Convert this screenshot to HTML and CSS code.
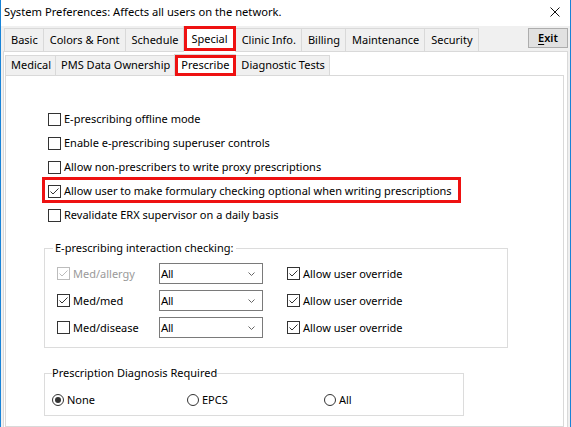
FILE: index.html
```html
<!DOCTYPE html>
<html>
<head>
<meta charset="utf-8">
<link rel="stylesheet" href="styles.css">
</head>
<body>
<div class="window">
  <div class="titlebar">
    <span class="title">System Preferences: Affects all users on the network.</span>
    <svg class="close" width="10" height="10" viewBox="0 0 10 10"><path d="M0.5 0.5L9.5 9.5M9.5 0.5L0.5 9.5" stroke="#111" stroke-width="1" fill="none"/></svg>
  </div>
  <div class="body">
    <div class="tabbar">
      <div class="tabs">
        <div class="tab">Basic</div>
        <div class="tab">Colors &amp; Font</div>
        <div class="tab">Schedule</div>
        <div class="tab sel marked">Special</div>
        <div class="tab">Clinic Info.</div>
        <div class="tab">Billing</div>
        <div class="tab">Maintenance</div>
        <div class="tab">Security</div>
      </div>
      <div class="exit"><u>E</u>xit</div>
    </div>
    <div class="panel">
      <div class="subtabs">
        <div class="subtab">Medical</div>
        <div class="subtab">PMS Data Ownership</div>
        <div class="subtab sel marked">Prescribe</div>
        <div class="subtab">Diagnostic Tests</div>
      </div>
      <div class="subpanel">
        <div class="options">
          <div class="opt"><span class="cb"></span><span class="lbl">E-prescribing offline mode</span></div>
          <div class="opt"><span class="cb"></span><span class="lbl">Enable e-prescribing superuser controls</span></div>
          <div class="opt"><span class="cb"></span><span class="lbl">Allow non-prescribers to write proxy prescriptions</span></div>
          <div class="opt marked-row"><span class="cb on"><svg viewBox="0 0 11 11"><path d="M1.5 5.5L4 8L9.5 2.5" /></svg></span><span class="lbl">Allow user to make formulary checking optional when writing prescriptions</span></div>
          <div class="opt"><span class="cb"></span><span class="lbl">Revalidate ERX supervisor on a daily basis</span></div>
        </div>

        <fieldset class="group interact">
          <legend>E-prescribing interaction checking:</legend>
          <div class="grid">
            <div class="cell chk disabled"><span class="cb on"><svg viewBox="0 0 11 11"><path d="M1.5 5.5L4 8L9.5 2.5" /></svg></span><span class="lbl">Med/allergy</span></div>
            <div class="combo"><span class="val">All</span><svg width="7" height="4" viewBox="0 0 7 4"><path d="M0.5 0.5L3.5 3.5L6.5 0.5" /></svg></div>
            <div class="cell chk ovr"><span class="cb on"><svg viewBox="0 0 11 11"><path d="M1.5 5.5L4 8L9.5 2.5" /></svg></span><span class="lbl">Allow user override</span></div>

            <div class="cell chk"><span class="cb on"><svg viewBox="0 0 11 11"><path d="M1.5 5.5L4 8L9.5 2.5" /></svg></span><span class="lbl">Med/med</span></div>
            <div class="combo"><span class="val">All</span><svg width="7" height="4" viewBox="0 0 7 4"><path d="M0.5 0.5L3.5 3.5L6.5 0.5" /></svg></div>
            <div class="cell chk ovr"><span class="cb on"><svg viewBox="0 0 11 11"><path d="M1.5 5.5L4 8L9.5 2.5" /></svg></span><span class="lbl">Allow user override</span></div>

            <div class="cell chk"><span class="cb"></span><span class="lbl">Med/disease</span></div>
            <div class="combo"><span class="val">All</span><svg width="7" height="4" viewBox="0 0 7 4"><path d="M0.5 0.5L3.5 3.5L6.5 0.5" /></svg></div>
            <div class="cell chk ovr"><span class="cb on"><svg viewBox="0 0 11 11"><path d="M1.5 5.5L4 8L9.5 2.5" /></svg></span><span class="lbl">Allow user override</span></div>
          </div>
        </fieldset>

        <fieldset class="group diag">
          <legend>Prescription Diagnosis Required</legend>
          <div class="radios">
            <div class="cell"><span class="rb on"></span><span class="lbl">None</span></div>
            <div class="cell"><span class="rb"></span><span class="lbl">EPCS</span></div>
            <div class="cell"><span class="rb"></span><span class="lbl">All</span></div>
          </div>
        </fieldset>
      </div>
    </div>
  </div>
</div>
</body>
</html>
```
FILE: styles.css
```css
html, body {
  margin: 0;
  padding: 0;
  background: #ffffff;
}

.window {
  width: 571px;
  height: 427px;
  box-sizing: border-box;
  border-left: 1px solid #1883d7;
  border-right: 1px solid #1883d7;
  overflow: hidden;
  display: flex;
  flex-direction: column;
  font-family: "Noto Sans", sans-serif;
  font-size: 11px;
  color: #000;
}

.titlebar {
  height: 26px;
  flex: none;
  background: #fff;
  display: flex;
  align-items: center;
  justify-content: space-between;
  padding: 0 10px 0 3px;
}

.title {
  font-size: 11.2px;
  line-height: 16px;
  padding-bottom: 2px;
}

.close {
  display: block;
  margin-top: -2px;
}

.body {
  flex: 1;
  min-height: 0;
  background: #f0f0f0;
  padding: 0 2px;
  display: flex;
  flex-direction: column;
}

.tabbar {
  height: 25px;
  flex: none;
  display: flex;
  justify-content: space-between;
  align-items: flex-end;
  padding-left: 1px;
}

.tabs {
  display: flex;
  align-items: flex-end;
  height: 100%;
}

.tab {
  height: 23px;
  box-sizing: border-box;
  border: 1px solid #d9d9d9;
  border-bottom: none;
  margin-right: -1px;
  padding: 0 5px 0 6px;
  line-height: 21px;
  background: #f0f0f0;
  white-space: nowrap;
}

.tab.sel {
  height: 26px;
  margin-bottom: -1px;
  background: #fff;
  position: relative;
  z-index: 1;
  padding: 0 7px;
  line-height: 24px;
}

.marked::after {
  content: "";
  position: absolute;
  left: 0;
  right: -1px;
  top: -1px;
  bottom: 1px;
  border: 3px solid #ee1111;
  pointer-events: none;
}

.exit {
  align-self: flex-start;
  margin-top: 2px;
  width: 40px;
  height: 20px;
  box-sizing: border-box;
  border: 1px solid #adadad;
  background: #e1e1e1;
  font-weight: 600;
  text-align: center;
  line-height: 17px;
}

.exit u {
  text-decoration-thickness: 1px;
  text-underline-offset: 2px;
}

.panel {
  flex: 1;
  background: #fff;
  border: 1px solid #d9d9d9;
  border-bottom: none;
  padding: 3px 3px 0 1px;
  display: flex;
  flex-direction: column;
}

.subtabs {
  height: 20px;
  flex: none;
  display: flex;
  align-items: flex-end;
}

.subtab {
  height: 20px;
  box-sizing: border-box;
  border: 1px solid #d9d9d9;
  border-bottom: none;
  margin-right: -1px;
  padding: 0 4px 0 5px;
  line-height: 18px;
  background: #f0f0f0;
  white-space: nowrap;
}

.subtab.sel {
  height: 22px;
  margin-bottom: -1px;
  background: #fff;
  position: relative;
  z-index: 1;
  padding: 0 6px;
  line-height: 20px;
}

.subtab.marked::after {
  top: 0;
  bottom: 0;
  right: -1px;
}

.subpanel {
  flex: 1;
  background: #fff;
  border: 1px solid #d9d9d9;
  padding: 31px 0 0 38px;
}

.options {
  display: flex;
  flex-direction: column;
  align-items: flex-start;
  margin-left: 4px;
}

.opt {
  height: 24px;
  display: flex;
  align-items: center;
  position: relative;
  white-space: nowrap;
}

.marked-row::after {
  content: "";
  position: absolute;
  left: -6px;
  right: -9px;
  top: -2px;
  bottom: 0;
  border: 3px solid #ee1111;
  pointer-events: none;
}

.cb {
  width: 13px;
  height: 13px;
  flex: none;
  box-sizing: border-box;
  border: 1px solid #333;
  background: #fff;
  display: flex;
  align-items: center;
  justify-content: center;
}

.cb svg {
  width: 11px;
  height: 11px;
  display: block;
}

.cb svg path {
  fill: none;
  stroke: #333;
  stroke-width: 1;
}

.lbl {
  margin-left: 3px;
  line-height: 16px;
  white-space: nowrap;
}

.group {
  margin: 13px 0 0 0;
  border: 1px solid #dcdcdc;
  box-sizing: border-box;
  min-width: 0;
}

.group legend {
  line-height: 16px;
  padding: 0 3px 0 2px;
  margin-left: -4px;
}

.interact {
  width: 464px;
  padding: 7px 0 9px 12px;
}

.grid {
  display: grid;
  grid-template-columns: 102px 104px auto;
  row-gap: 6px;
  align-items: center;
}

.cell {
  display: flex;
  align-items: center;
  white-space: nowrap;
}

.ovr {
  padding-left: 24px;
}

.disabled .cb {
  border-color: #bcbcbc;
}

.disabled .cb svg path {
  stroke: #bcbcbc;
}

.disabled .lbl {
  color: #9a9a9a;
}

.combo {
  width: 104px;
  height: 21px;
  box-sizing: border-box;
  border: 1px solid #7a7a7a;
  background: #fff;
  display: flex;
  align-items: center;
  justify-content: space-between;
  padding: 0 7px 0 1px;
}

.combo .val {
  font-family: "Liberation Sans", sans-serif;
  font-size: 11px;
}

.combo svg {
  display: block;
}

.combo svg path {
  fill: none;
  stroke: #666;
  stroke-width: 1;
}

.diag {
  margin-top: 17px;
  width: 420px;
  padding: 10px 0 6px 7px;
}

.diag legend {
  padding: 0;
  margin-left: 0;
}

.radios {
  display: grid;
  grid-template-columns: 135px 137px auto;
  height: 18px;
  align-items: center;
}

.rb {
  width: 12px;
  height: 12px;
  flex: none;
  box-sizing: border-box;
  border: 1px solid #333;
  border-radius: 50%;
  background: #fff;
  display: flex;
  align-items: center;
  justify-content: center;
}

.rb.on::before {
  content: "";
  width: 6px;
  height: 6px;
  border-radius: 50%;
  background: #333;
}
```
